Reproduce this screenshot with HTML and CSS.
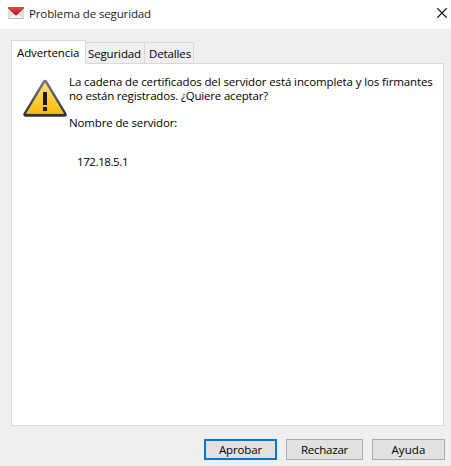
FILE: index.html
```html
<!DOCTYPE html>
<html lang="es">
<head>
<meta charset="utf-8">
<title>Problema de seguridad</title>
<link rel="stylesheet" href="styles.css">
</head>
<body>
<div class="dialog">
  <header class="titlebar">
    <svg class="mail" width="16" height="12" viewBox="0 0 16 12">
      <defs><linearGradient id="flap" x1="0" y1="0" x2="0" y2="1"><stop offset="0" stop-color="#dc4a43"/><stop offset="1" stop-color="#c3161a"/></linearGradient></defs>
      <rect width="16" height="12" fill="#dedede"/>
      <path d="M0 12L6 6.500H10L16 12Z" fill="#f3f3f3"/>
      <path d="M0 11.500H16" stroke="#bbb"/>
      <path d="M0 0H16V1.500L9 7.900Q8 8.700 7 7.900L0 1.500Z" fill="url(#flap)"/>
    </svg>
    <h1 class="title">Problema de seguridad</h1>
    <svg class="close" width="10" height="10" viewBox="0 0 10 10"><path d="M.3.3L9.700 9.700M9.700.3L.3 9.700" stroke="#000" stroke-width="1.150"/></svg>
  </header>
  <nav class="tabs">
    <div class="tab active">Advertencia</div>
    <div class="tab second">Seguridad</div>
    <div class="tab third">Detalles</div>
  </nav>
  <main class="panel">
    <svg class="warning" width="46" height="39" viewBox="0 0 46 39">
      <defs><linearGradient id="amber" x1="0" y1="0" x2="0" y2="1"><stop offset="0" stop-color="#ffe46a"/><stop offset="1" stop-color="#fbb90c"/></linearGradient>
      <linearGradient id="edge" x1="0" y1="0" x2="0" y2="1"><stop offset="0" stop-color="#777"/><stop offset="1" stop-color="#333"/></linearGradient></defs>
      <path d="M23 3L42.500 35.500H3.500Z" fill="url(#edge)" stroke="url(#edge)" stroke-width="4.500" stroke-linejoin="round"/>
      <path d="M23 4L41.500 34.500H4.500Z" fill="url(#amber)" stroke="#fff0a0" stroke-width=".5"/>
      <path d="M21 13H25V26H21ZM21 28H25V32H21Z" fill="#1c1a10"/>
    </svg>
    <div class="message">
      <p class="line intro">La cadena de certificados del servidor está incompleta y los firmantes</p>
      <p class="line question">no están registrados. ¿Quiere aceptar?</p>
      <p class="line label">Nombre de servidor:</p>
      <p class="line server">172.18.5.1</p>
    </div>
  </main>
  <footer class="actions">
    <button class="btn primary">Aprobar</button>
    <button class="btn wide">Rechazar</button>
    <button class="btn">Ayuda</button>
  </footer>
</div>
</body>
</html>
```
FILE: styles.css
```css
* { box-sizing: border-box; }
body { margin: 0; font-family: "Open Sans", "Noto Sans", sans-serif; font-size: 11.5px; line-height: 14px; color: #000; }
.dialog { width: 451px; height: 466px; background: #efefef; overflow: hidden; }
.titlebar { height: 29px; background: #fff; display: flex; align-items: flex-start; padding: 7px 4px 0 8px; }
.mail { flex: none; }
.title { margin: 0 auto 0 5px; font-size: 11.5px; font-weight: 400; letter-spacing: -0.13px; color: #222; }
.close { flex: none; margin-top: 1px; }
.tabs { display: flex; align-items: flex-end; margin: 11px 0 -1px 11px; height: 24px; }
.tab { border: 1px solid #d9d9d9; white-space: nowrap; letter-spacing: -0.13px; }
.active { width: 75px; height: 24px; padding: 5px 0 0 5px; background: #fff; border-bottom-color: #fff; position: relative; }
.second { width: 59px; height: 22px; padding: 4px 0 0 2px; border-left: 0; }
.third { width: 49px; height: 22px; padding: 4px 0 0 4px; border-left: 0; }
.panel { margin-left: 11px; width: 433px; height: 363px; background: #fff; border: 1px solid #d9d9d9; display: flex; align-items: flex-start; padding: 11px 0 0 10px; }
.warning { flex: none; margin-top: 4px; }
.message { margin-left: 1px; }
.line { margin: 0; white-space: nowrap; }
.intro { letter-spacing: -0.115px; }
.question { letter-spacing: -0.18px; }
.label { margin-top: 13px; letter-spacing: -0.14px; }
.server { margin: 25px 0 0 8px; letter-spacing: -0.4px; }
.actions { display: flex; justify-content: flex-end; gap: 9px; padding: 13px 6px 0 0; }
.btn { width: 73px; height: 21px; padding: 0; border: 1px solid #adadad; background: #e1e1e1; font: inherit; line-height: 14px; color: #000; letter-spacing: 0.1px; }
.wide { width: 77px; letter-spacing: -0.22px; }
.primary { border: 2px solid #0078d7; letter-spacing: -0.15px; }
```
